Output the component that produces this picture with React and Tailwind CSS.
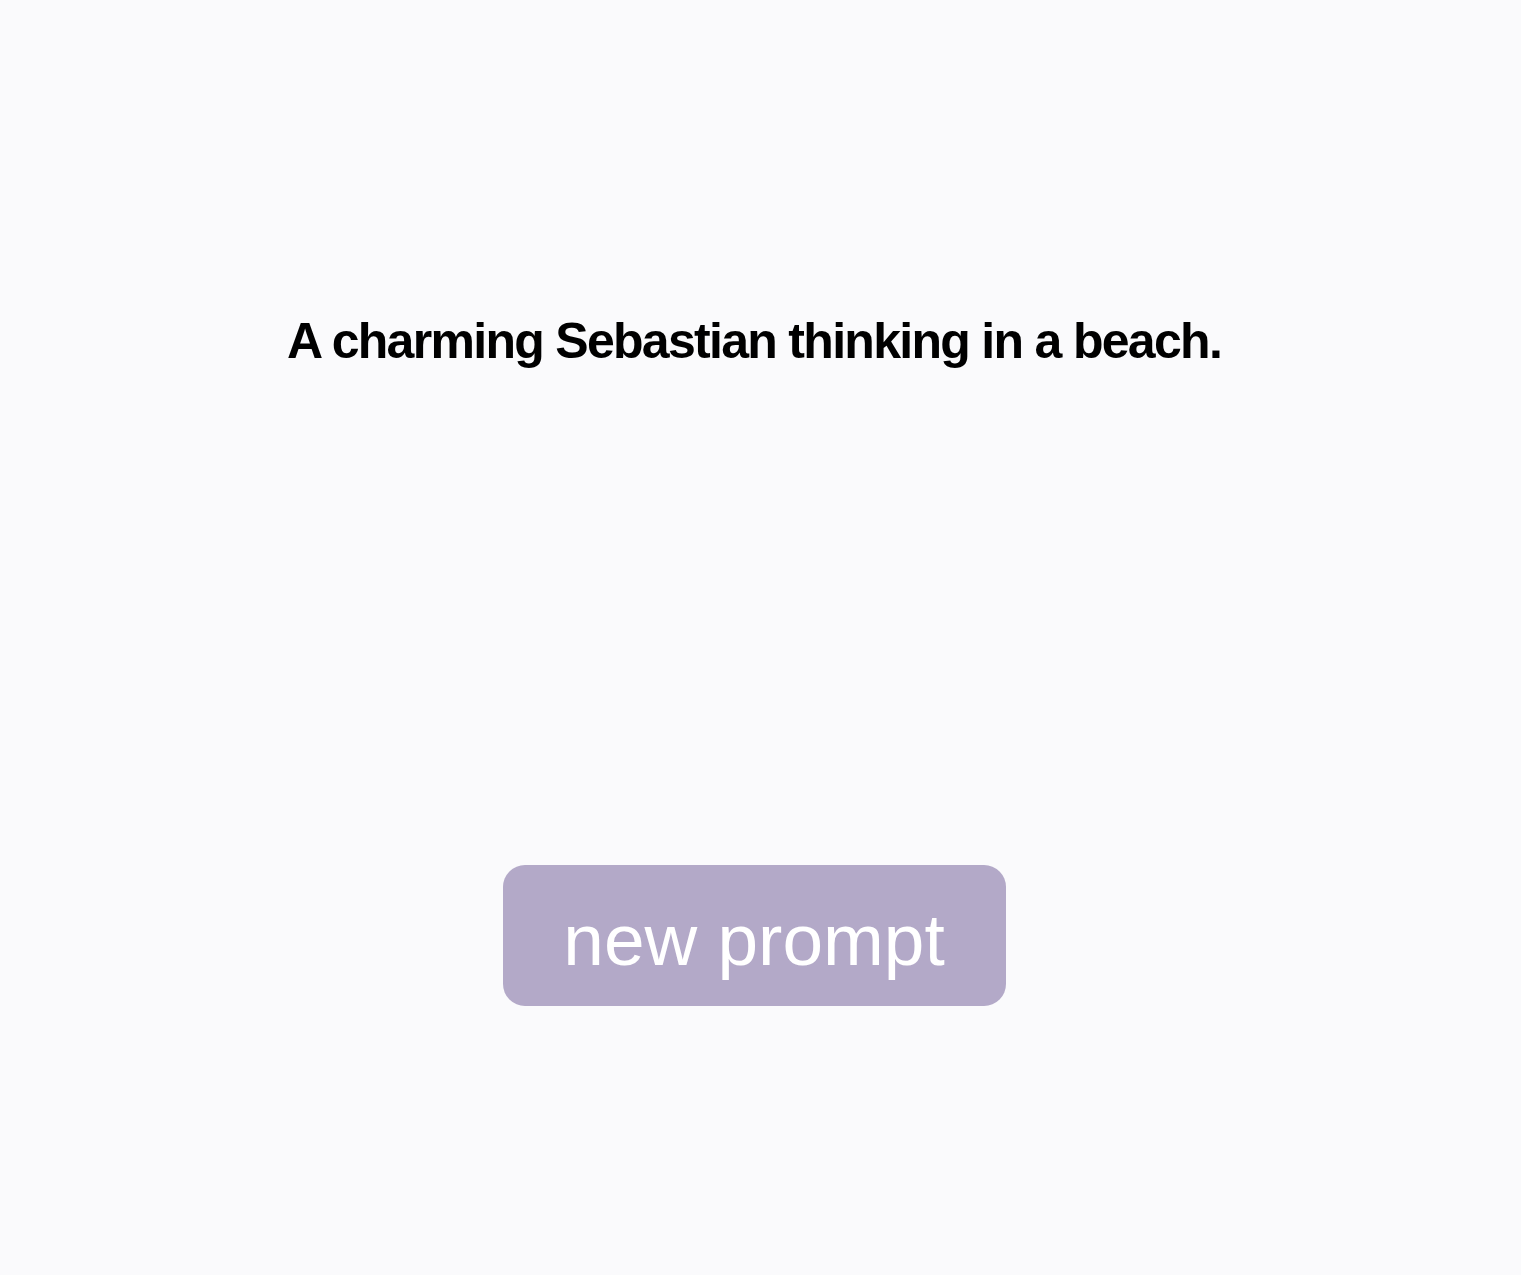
export default function App() {
  return (
    <div
      className="min-h-[1275px] w-full bg-[#fafafc]"
      style={{ fontFamily: '"Liberation Sans", Arial, sans-serif' }}
    >
      <div className="flex w-[1508px] flex-col items-center pt-[313px]">
        <h1 className="text-[50px] font-bold leading-[57.5px] tracking-[-1.7px] text-black">
          A charming Sebastian thinking in a beach.
        </h1>
        <button className="mt-[494px] flex h-[141px] w-[503px] items-start justify-center rounded-[22px] bg-[#b3a9c8] pt-[34px] text-[73px] leading-[82.7px] text-white">
          new prompt
        </button>
      </div>
    </div>
  );
}
